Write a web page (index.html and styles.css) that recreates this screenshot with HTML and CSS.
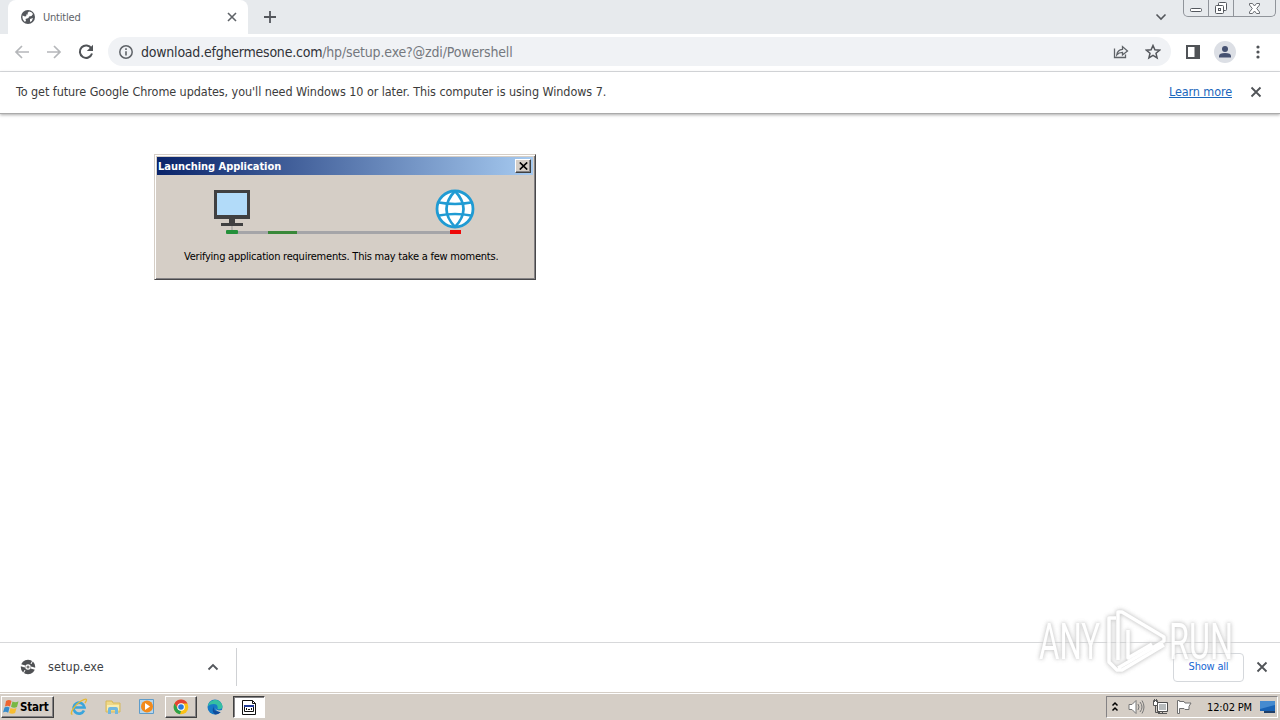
FILE: index.html
```html
<!DOCTYPE html>
<html lang="en">
<head>
<meta charset="utf-8">
<title>Untitled</title>
<link rel="stylesheet" href="styles.css">
</head>
<body>
<div class="screen">
  <header class="tabstrip">
    <div class="tab">
      <svg class="tab-icon" width="14" height="14" viewBox="0 0 14 14"><circle cx="7" cy="7" r="7" fill="#54575c"/><path d="M8 1.600 6.500 3 7 4.200 5 4.800 5.500 6 4 6.500 1.600 5.500Q.8 9 4 12l1-1.500L4.500 9l3-1 .5-1.500L10.500 6l1.500-2Q11 2 8 1.600zM9 9l3-1Q11.500 11 9 12z" fill="#fff"/></svg>
      <span class="tab-title">Untitled</span>
      <svg width="10" height="10" viewBox="0 0 10 10"><path d="m1 1 8 8M9 1 1 9" stroke="#5f6368" stroke-width="1.6"/></svg>
    </div>
    <svg class="new-tab" width="12" height="12" viewBox="0 0 12 12"><path d="M6 0v12M0 6h12" stroke="#54575c" stroke-width="1.8"/></svg>
    <svg class="tab-search" width="12" height="8" viewBox="0 0 12 8"><path d="m1.500 1.500 4.500 4.500 4.500-4.500" fill="none" stroke="#54575c" stroke-width="1.6"/></svg>
    <div class="window-buttons">
      <div class="wb wb-min"><svg width="14" height="6" viewBox="0 0 14 6"><rect x="1.500" y="1.500" width="11" height="3" rx="1" fill="#fff" stroke="#54585e"/></svg></div>
      <div class="wb wb-max"><svg width="14" height="14" viewBox="0 0 14 14" fill="#fff" stroke="#54585e"><rect x="4.500" y="1.500" width="8" height="8" rx="1"/><rect x="1.500" y="4.500" width="8" height="8" rx="1"/><rect x="4.500" y="7.500" width="2" height="2"/></svg></div>
      <div class="wb wb-close"><svg width="13" height="11" viewBox="0 0 13 11"><path d="M1.500.5h3l2 2.500 2-2.500h3v1.500L8.700 5.500l2.800 3.500v1.500h-3l-2-2.500-2 2.500h-3V9l2.800-3.500L1.500 2z" fill="#fff" stroke="#6a6d72"/></svg></div>
    </div>
  </header>

  <nav class="toolbar">
    <svg class="nav-icon" width="16" height="16" viewBox="0 0 16 16"><path d="M15 8H2M8 2 2 8l6 6" fill="none" stroke="#b5b7ba" stroke-width="1.7"/></svg>
    <svg class="nav-icon" width="16" height="16" viewBox="0 0 16 16"><path d="M1 8h13M8 2l6 6-6 6" fill="none" stroke="#b5b7ba" stroke-width="1.7"/></svg>
    <svg class="nav-icon" width="16" height="16" viewBox="0 0 16 16"><path d="M13.400 4.500A6.200 6.200 0 1 0 14 9.500" fill="none" stroke="#505357" stroke-width="2"/><path d="M15 .8V7H8.800z" fill="#505357"/></svg>
    <div class="omnibox">
      <svg width="14" height="14" viewBox="0 0 14 14"><circle cx="7" cy="7" r="6.200" fill="none" stroke="#5f6368" stroke-width="1.500"/><path d="M7 6.200v4.200M7 3.300v1.600" stroke="#5f6368" stroke-width="1.600"/></svg>
      <span class="url"><span class="host">download.efghermesone.com</span><span class="path">/hp/setup.exe?@zdi/Powershell</span></span>
      <svg class="share" width="16" height="16" viewBox="0 0 16 16"><path d="M1.500 4.500v9h11v-3M3.800 10.800C4.300 7 6.500 5.500 9.500 5.300V2.600l5 4.300-5 4V8.300c-2.500 0-4.200.7-5.700 2.500z" fill="none" stroke="#5f6368" stroke-width="1.300"/></svg>
      <svg class="star" width="16" height="16" viewBox="0 0 16 16"><path d="m8 1.500 1.900 4.300 4.700.4-3.600 3.100 1.100 4.600L8 11.400l-4.100 2.500L5 9.300 1.400 6.200l4.700-.4z" fill="none" stroke="#54575c" stroke-width="1.500"/></svg>
    </div>
    <svg class="panel" width="14" height="14" viewBox="0 0 14 14"><path d="M0 0h14v14H0z" fill="#505357"/><path d="M2 2h6.500v10H2z" fill="#fff"/></svg>
    <svg class="avatar" width="22" height="22" viewBox="0 0 22 22"><circle cx="11" cy="11" r="11" fill="#dcdfe5"/><circle cx="11" cy="8" r="3" fill="#455171"/><path d="M5 16.500v-1.500q0-3 6-3t6 3v1.500z" fill="#455171"/></svg>
    <svg class="dots" width="4" height="14" viewBox="0 0 4 14" fill="#505357"><circle cx="2" cy="2" r="1.600"/><circle cx="2" cy="7" r="1.600"/><circle cx="2" cy="12" r="1.600"/></svg>
  </nav>

  <div class="infobar">
    <span class="info-text">To get future Google Chrome updates, you'll need Windows 10 or later. This computer is using Windows 7.</span>
    <a class="learn">Learn more</a>
    <svg width="12" height="12" viewBox="0 0 12 12"><path d="m1.500 1.500 9 9M10.500 1.500l-9 9" stroke="#505357" stroke-width="1.800"/></svg>
  </div>

  <main class="page">
    <section class="dialog">
      <div class="titlebar">
        <span class="dialog-title">Launching Application</span>
        <div class="dialog-close"><svg width="9" height="8" viewBox="0 0 9 8"><path d="m.8.500 7.400 7M8.200.500l-7.400 7" stroke="#000" stroke-width="1.700"/></svg></div>
      </div>
      <svg class="transfer" width="264" height="48" viewBox="0 0 264 48">
        <path d="M24 44.500h216" stroke="#a5a5a8" stroke-width="3"/>
        <path d="M55 44.500h29" stroke="#398839" stroke-width="3"/>
        <path d="M1 2h36v29H1z" fill="#404041"/><path d="M4 5h30v22H4z" fill="#b2dbf9"/>
        <path d="M16 31h6v4h-6zM8 35h22v3H8z" fill="#404041"/><path d="M19 38v5" stroke="#999"/>
        <rect x="13" y="42" width="12" height="4" rx="1" fill="#24903a"/>
        <circle cx="242" cy="21" r="18" fill="#fff" stroke="#209bd3" stroke-width="2.800"/>
        <path d="M242 3q-17 18 0 36M242 3q17 18 0 36" fill="none" stroke="#209bd3" stroke-width="2.600"/>
        <path d="M226 14.500q16 3 32 0M226 27.500q16-3 32 0" fill="none" stroke="#209bd3" stroke-width="2.700"/>
        <path d="M237 42h11v4h-11z" fill="#ee0808"/>
      </svg>
      <div class="dialog-message">Verifying application requirements. This may take a few moments.</div>
    </section>
  </main>

  <footer class="downloads">
    <svg class="file-icon" width="16" height="16" viewBox="0 0 16 16"><circle cx="8" cy="8" r="5" fill="none" stroke="#4f5154" stroke-width="4.500"/><circle cx="8" cy="8" r="1.500" fill="#777"/><path d="m0 6 5 1.500M11 8.500l5 1.500" stroke="#fff" stroke-width="2"/><path d="m5 11-2 4M11 5l2-4" stroke="#fff"/></svg>
    <span class="file-name">setup.exe</span>
    <svg width="12" height="8" viewBox="0 0 12 8"><path d="m1.500 6.500 4.500-4.500 4.500 4.500" fill="none" stroke="#54575c" stroke-width="1.800"/></svg>
    <i class="separator"></i>
    <div class="show-all">Show all</div>
    <svg width="12" height="12" viewBox="0 0 12 12"><path d="m1.500 1.500 9 9M10.500 1.500l-9 9" stroke="#505357" stroke-width="1.800"/></svg>
  </footer>

  <div class="taskbar">
    <div class="start">
      <svg width="17" height="16" viewBox="0 0 17 16"><path d="M3 2q3-2 5.500 0L7 7.500q-2.500-1.500-5 0z" fill="#ee642f"/><path d="M9.500 2.500q3 1.500 6-.2L14 8q-3 1.500-6-.2z" fill="#78b843"/><path d="M1.500 8.500q2.500-1.500 5 0l-1.300 5.300Q2.500 12 0 13.500z" fill="#368ccb"/><path d="M7.500 9q3 1.500 6 0l-1.400 5q-3 1.500-6 0z" fill="#f7bd31"/></svg>
      <span>Start</span>
    </div>
    <div class="task t-ie"><svg width="18" height="18" viewBox="0 0 18 18"><path d="M14 12.500A5.500 5.500 0 1 1 14.500 9.500H5" fill="none" stroke="#3aa5dc" stroke-width="2.700"/><path d="M2.500 16C-1 17 4 7 11 3s6-1 4 2" fill="none" stroke="#e6b932" stroke-width="1.400"/></svg></div>
    <div class="task"><svg width="18" height="18" viewBox="0 0 18 18"><path d="M2 3h6l1 2h7v9H2z" fill="#efd887" stroke="#d6b85b"/><path d="M3 7h12v5H3z" fill="#f9edb0"/><path d="M4 16v-5q0-2 2-2h6q2 0 2 2v5h-3v-4H7v4z" fill="#71b7df"/></svg></div>
    <div class="task"><svg width="18" height="18" viewBox="0 0 18 18"><path d="M1.500 1.500h14v14h-14z" fill="#b6d6ed" stroke="#5e9cca"/><circle cx="9" cy="8.500" r="6" fill="#f28a1c"/><path d="m7 5 5 3.500L7 12z" fill="#fff"/></svg></div>
    <div class="task raised"><svg width="16" height="16" viewBox="0 0 16 16"><circle cx="8" cy="8" r="7.300" fill="#fbc116"/><path d="M1.500 4.500A7.300 7.300 0 0 1 14.500 4.500H8L5 10z" fill="#e44334"/><path d="m1.500 4.500 3.800 6L8 12l-1 3.200A7.300 7.300 0 0 1 1.500 4.500z" fill="#2ba24c"/><circle cx="8" cy="8" r="3.800" fill="#fff"/><circle cx="8" cy="8" r="2.800" fill="#2879dc"/></svg></div>
    <div class="task"><svg width="16" height="16" viewBox="0 0 16 16"><circle cx="8" cy="8" r="7.500" fill="#1679c6"/><path d="M1 7C2 0 13-2 15.500 7q0 4-5 3 1-5-4-5-3 0-5.500 2z" fill="#35bfa2"/><path d="M7 7q-2 6 7 5.500-2 3-6 3-4-3-1-8.500z" fill="#104c9b"/><path d="M8 8q0 3 4 3.500l5-.5v2h-4q-5-1-5-5z" fill="#d5cec6"/></svg></div>
    <div class="task pressed"><svg width="14" height="16" viewBox="0 0 14 16"><path d="M.500 1.500h10l3 3v11H.500z" fill="#fff" stroke="#111"/><path d="M10.500 1.500v3h3" fill="none" stroke="#111"/><path d="M2.500 6.500h9v6h-9z" fill="#fff" stroke="#111"/><path d="M2 6h10v2H2z" fill="#203a98"/><path d="M4.500 9v2M6 10.500h2M9.500 9v2" stroke="#111"/></svg></div>
    <div class="tray">
      <svg class="chevrons" width="8" height="12" viewBox="0 0 8 12"><path d="m1.500 4.500 2.500-2.500 2.500 2.500M1.500 9.500l2.500-2.500 2.500 2.500" fill="none" stroke="#000" stroke-width="1.500"/></svg>
      <svg class="sound" width="17" height="16" viewBox="0 0 17 16"><path d="M1 5.500h3l4-4v13l-4-4H1z" fill="#fff" stroke="#777"/><path d="M10 5q2 3 0 6M12 3q4 5 0 10M14 1.500q4 6.500 0 13" fill="none" stroke="#777"/></svg>
      <svg class="network" width="17" height="16" viewBox="0 0 17 16"><path d="M5.500 3.500h10v9h-10z" fill="#b7bbbc" stroke="#4d4d4d"/><path d="M6.500 4.500h8v7h-8z" stroke="#fff" fill="none"/><path d="M10.500 12v2M6 14.500h9M3.500 6v7.500H8" fill="none" stroke="#555"/><path d="M1.500 1.500h4v5h-4z" fill="#fff" stroke="#555"/><path d="M2.500 0v3M4.500 0v3" stroke="#555"/></svg>
      <svg class="flag" width="17" height="16" viewBox="0 0 17 16"><path d="M1.500 1.500v13h2V9.500H8l1 1h4q-1-3 2-6.500H9l-1-1.500H3.500v-1z" fill="#fff" stroke="#707070"/></svg>
      <span class="clock">12:02 PM</span>
      <svg width="15" height="14" viewBox="0 0 15 14"><path d="M0 1h15v10H0z" fill="#1963b5"/><path d="M0 1h15v4L0 9z" fill="#458bd0"/><path d="M4 11h11v2H4z" fill="#203f68"/></svg>
    </div>
  </div>

  <svg class="watermark" width="210" height="80" viewBox="0 0 210 80">
    <g class="mark">
      <text x="7" y="57" textLength="61" lengthAdjust="spacingAndGlyphs">ANY</text>
      <text x="137" y="57" textLength="64" lengthAdjust="spacingAndGlyphs">RUN</text>
      <path d="M84 16h-7v44l8 8h5l42-25M86 58V10h4l42 25v4L86 66M96 28v28l24-14"/>
    </g>
  </svg>
</div>
</body>
</html>
```
FILE: styles.css
```css
* { box-sizing: border-box; }
body { margin: 0; background: #fff; font-family: "DejaVu Sans Condensed", "DejaVu Sans", sans-serif; }
svg { display: block; flex: none; }
.screen { position: relative; width: 1280px; height: 720px; overflow: hidden; display: flex; flex-direction: column; white-space: nowrap; }

.tabstrip { height: 34px; flex: none; display: flex; align-items: flex-start; background: #e7eaed; }
.tab { width: 240px; height: 34px; margin-left: 8px; padding: 0 11px 0 13px; display: flex; align-items: center; background: #fff; border-radius: 8px 8px 0 0; }
.tab-title { flex: 1; margin-left: 8px; font-size: 11px; letter-spacing: -.2px; color: #606368; }
.new-tab { margin: 11px 0 0 16px; }
.tab-search { margin: 13px 16px 0 auto; }
.window-buttons { width: 93px; height: 17px; margin-right: 4px; display: flex; border: 1px solid #90949a; border-top: 0; border-radius: 0 0 5px 5px; }
.wb { display: flex; justify-content: center; border-right: 1px solid #90949a; }
.wb-min { width: 25px; padding-top: 7px; }
.wb-max { width: 25px; padding-top: 1px; }
.wb-close { flex: 1; padding-top: 3px; border: 0; }

.toolbar { height: 38px; flex: none; padding: 0 20px 2px 14px; display: flex; align-items: center; background: #fff; border-bottom: 1px solid #d8dade; }
.nav-icon { margin-right: 16px; }
.omnibox { width: 1064px; height: 29px; margin-left: -2px; padding: 0 10px 0 11px; display: flex; align-items: center; border-radius: 15px; background: #f0f2f5; }
.url { flex: 1; margin-left: 8px; padding-top: 1px; font-size: 14px; }
.host { color: #303338; letter-spacing: -.22px; }
.path { color: #74787e; letter-spacing: -.16px; }
.share { margin-right: 16px; }
.panel { margin-left: 15px; }
.avatar { margin-left: 14px; }
.dots { margin-left: 20px; }

.infobar { height: 42px; flex: none; padding: 0 18px 1px 16px; display: flex; align-items: center; border-bottom: 1px solid #aaa; box-shadow: 0 1px 3px #aaa; color: #3c3c3c; font-size: 12.500px; }
.info-text { flex: 1; padding-bottom: 2px; letter-spacing: -.07px; }
.learn { margin-right: 18px; padding-bottom: 2px; letter-spacing: -.1px; color: #1b67bc; text-decoration: underline; }

.page { flex: 1; padding: 40px 154px; }
.dialog { width: 382px; height: 126px; padding: 2px; display: flex; flex-direction: column; background: #d5cec6; border: 1px solid; border-color: #d5cec6 #48484a #48484a #d5cec6; box-shadow: inset 1px 1px #fff, inset -1px -1px #848284; }
.titlebar { height: 18px; flex: none; padding: 0 2px 0 1px; display: flex; justify-content: space-between; align-items: center; background: linear-gradient(90deg, #0a246a, #a6caf0); }
.dialog-title { color: #fff; font-size: 11px; font-weight: bold; letter-spacing: -.04px; }
.dialog-close { width: 16px; height: 14px; display: grid; place-items: center; background: #d5cec6; border: 1px solid; border-color: #fff #404040 #404040 #fff; box-shadow: inset -1px -1px #848284; }
.transfer { margin: 13px 0 0 56px; }
.dialog-message { margin: 14px 0 0 27px; font-size: 11px; line-height: 14px; letter-spacing: -.23px; color: #000; }

.downloads { height: 50px; flex: none; padding: 0 12px 1px 20px; display: flex; align-items: center; background: #fff; border-top: 1px solid #d7d8da; }
.file-name { width: 152px; margin: 0 7px 0 12px; padding-bottom: 1px; font-size: 12.500px; letter-spacing: .08px; color: #404246; }
.separator { width: 1px; height: 38px; margin-left: 17px; background: #cfd1d4; }
.show-all { width: 71px; height: 29px; margin: 0 12px 0 auto; border: 1px solid #d5d8dc; border-radius: 4px; text-align: center; line-height: 26px; font-size: 11px; letter-spacing: -.2px; color: #1967d2; }

.taskbar { height: 28px; flex: none; padding: 3px 0 1px 1px; display: flex; background: #d5cec6; border-top: 1px solid #d5cec6; box-shadow: inset 0 1px #fff; }
.start, .raised { border: 1px solid; border-color: #fff #404040 #404040 #fff; box-shadow: inset -1px -1px #848284; }
.start { width: 53px; height: 22px; display: flex; align-items: center; padding-left: 1px; font-size: 11.500px; font-weight: bold; letter-spacing: -.2px; }
.task { width: 32px; height: 22px; margin-right: 2px; display: grid; place-items: center; }
.t-ie { margin-left: 9px; }
.pressed { background: #fff; border: 1px solid; border-color: #404040 #fff #fff #404040; box-shadow: inset 1px 1px #848284; }
.tray { width: 172px; height: 22px; margin: 0 2px 0 auto; padding: 0 2px 0 4px; display: flex; align-items: center; border: 1px solid; border-color: #848284 #fff #fff #848284; }
.sound { margin-left: 9px; }
.network { margin-left: 7px; }
.flag { margin-left: 7px; }
.clock { margin: 0 8px 0 auto; font-size: 11px; letter-spacing: -.15px; }

.watermark { position: absolute; left: 1032px; top: 602px; }
.mark { filter: drop-shadow(0 0 2px #bbb) drop-shadow(0 0 1px #ddd); opacity: .8; fill: #fff; font: 50px Roboto, sans-serif; }
.mark path { fill: none; stroke: #fff; stroke-width: 3.500; stroke-linejoin: round; }
```
